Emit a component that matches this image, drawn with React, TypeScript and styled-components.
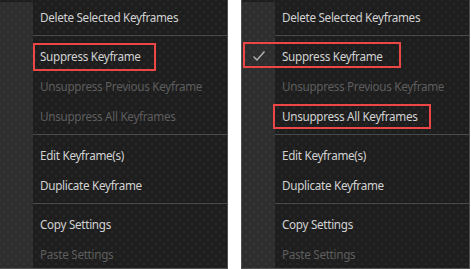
import styled, { createGlobalStyle } from "styled-components";

const GlobalStyle = createGlobalStyle`
  html, body {
    margin: 0;
    padding: 0;
    background: #ffffff;
  }
  body {
    font-family: "Noto Sans", "Segoe UI", sans-serif;
  }
`;

const Page = styled.div`
  display: flex;
  gap: 13px;
  width: 471px;
  height: 269px;
  overflow: hidden;
`;

const Panel = styled.div<{ $edge?: boolean }>`
  position: relative;
  width: ${props => props.$edge ? 228 : 229}px;
  height: 269px;
  box-sizing: border-box;
  padding-top: 2px;
  border: 1px solid #505050;
  border-top: none;
  border-left: ${props => props.$edge ? "none" : "1px solid #505050"};
  background-color: #1e1e1e;
  background-image:
    radial-gradient(circle, rgba(255, 255, 255, 0.08) 0.6px, transparent 0.9px),
    radial-gradient(circle, rgba(255, 255, 255, 0.08) 0.6px, transparent 0.9px);
  background-size: 8px 8px;
  background-position: 0 0, 4px 4px;
  overflow: hidden;
`;

const Row = styled.div`
  position: relative;
  display: flex;
  height: 30px;
  align-items: stretch;
`;

const Gutter = styled.div`
  flex: 0 0 33px;
  display: flex;
  align-items: center;
  justify-content: center;
  background: rgba(255, 255, 255, 0.075);
`;

const Label = styled.div<{ $disabled?: boolean }>`
  display: flex;
  align-items: center;
  padding-left: 7px;
  font-size: 11.7px;
  letter-spacing: -0.3px;
  white-space: nowrap;
  color: ${props => props.$disabled ? "#5d5d5d" : "#d2d2d2"};
`;

const SepRow = styled.div`
  display: flex;
  height: 9px;
`;

const SepLine = styled.div`
  flex: 1;
  margin-top: 3px;
  height: 1px;
  background: #4a4a4a;
`;

const Mark = styled.div<{ $left: number; $width: number; $top: number; $height: number }>`
  position: absolute;
  left: ${props => props.$left}px;
  top: ${props => props.$top}px;
  width: ${props => props.$width}px;
  height: ${props => props.$height}px;
  box-sizing: border-box;
  border: 2.5px solid #ec4646;
  pointer-events: none;
`;

interface IItem {
  label?: string;
  disabled?: boolean;
  checked?: boolean;
  mark?: { left: number; width: number; top: number; height: number };
}

function Check() {
  return (
    <svg width="14" height="12" viewBox="0 0 14 12">
      <path d="M1.5 6.5 L5 10 L12.5 1.5" fill="none" stroke="#b4b4b4" strokeWidth="1.4" />
    </svg>
  );
}

function Menu({ items, edge }: { items: IItem[]; edge?: boolean }) {
  return (
    <Panel $edge={edge}>
      {items.map((item, i) =>
        item.label === undefined ? (
          <SepRow key={i}>
            <Gutter />
            <SepLine />
          </SepRow>
        ) : (
          <Row key={i}>
            <Gutter>{item.checked && <Check />}</Gutter>
            <Label $disabled={item.disabled}>{item.label}</Label>
            {item.mark && (
              <Mark
                $left={item.mark.left}
                $width={item.mark.width}
                $top={item.mark.top}
                $height={item.mark.height}
              />
            )}
          </Row>
        )
      )}
    </Panel>
  );
}

const leftItems: IItem[] = [
  { label: "Delete Selected Keyframes" },
  {},
  { label: "Suppress Keyframe", mark: { left: 33, width: 123, top: 2, height: 28 } },
  { label: "Unsuppress Previous Keyframe", disabled: true },
  { label: "Unsuppress All Keyframes", disabled: true },
  {},
  { label: "Edit Keyframe(s)" },
  { label: "Duplicate Keyframe" },
  {},
  { label: "Copy Settings" },
  { label: "Paste Settings", disabled: true },
];

const rightItems: IItem[] = [
  { label: "Delete Selected Keyframes" },
  {},
  { label: "Suppress Keyframe", checked: true, mark: { left: 1, width: 158, top: 1, height: 26 } },
  { label: "Unsuppress Previous Keyframe", disabled: true },
  { label: "Unsuppress All Keyframes", mark: { left: 31, width: 158, top: 3, height: 25 } },
  {},
  { label: "Edit Keyframe(s)" },
  { label: "Duplicate Keyframe" },
  {},
  { label: "Copy Settings" },
  { label: "Paste Settings", disabled: true },
];

export default function App() {
  return (
    <>
      <GlobalStyle />
      <Page>
        <Menu items={leftItems} edge />
        <Menu items={rightItems} />
      </Page>
    </>
  );
}
